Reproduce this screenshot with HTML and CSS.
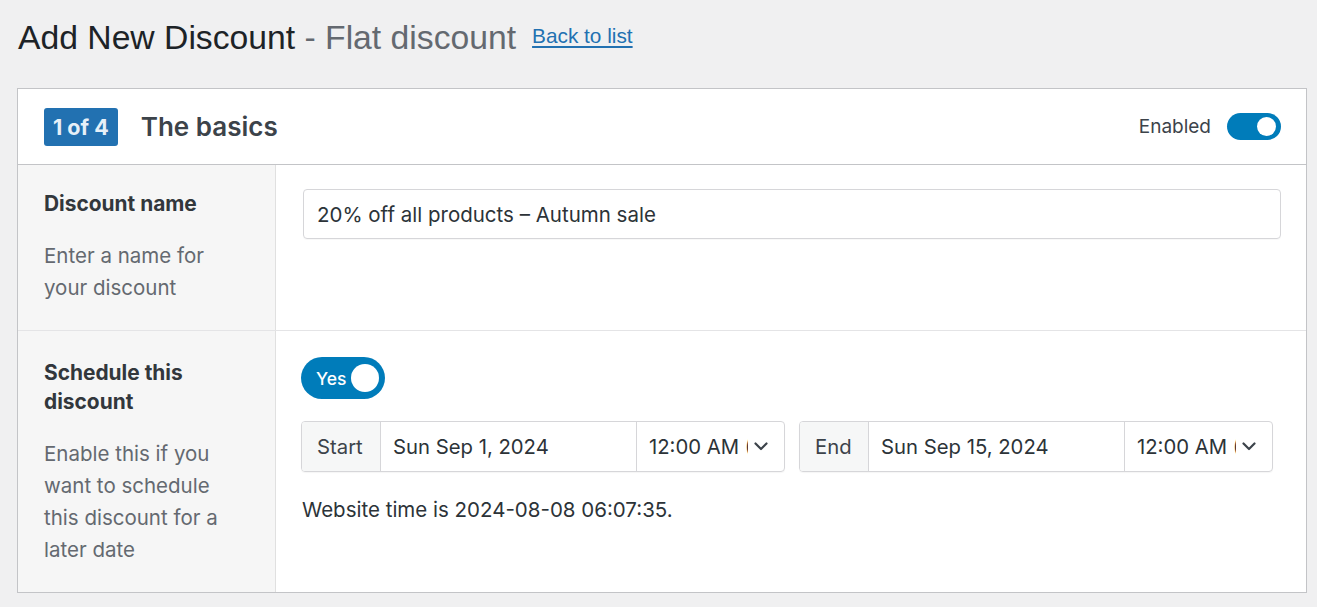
FILE: index.html
```html
<!DOCTYPE html>
<html>
<head>
<meta charset="utf-8">
<link rel="stylesheet" href="styles.css">
</head>
<body>
<div class="wrap">
  <div class="page-head">
    <h1 class="title">Add New Discount <span class="sub">- Flat discount</span></h1>
    <a class="back" href="#">Back to list</a>
  </div>
  <div class="card">
    <div class="card-head">
      <div class="step">
        <span class="badge">1 of 4</span>
        <h2 class="step-title">The basics</h2>
      </div>
      <div class="enabled">
        <span class="enabled-label">Enabled</span>
        <span class="switch"><span class="knob"></span></span>
      </div>
    </div>
    <div class="row">
      <div class="label-col">
        <div class="label">Discount name</div>
        <div class="desc">Enter a name for your discount</div>
      </div>
      <div class="field-col">
        <div class="text-input">20% off all products – Autumn sale</div>
      </div>
    </div>
    <div class="row row-last">
      <div class="label-col">
        <div class="label">Schedule this discount</div>
        <div class="desc">Enable this if you want to schedule this discount for a later date</div>
      </div>
      <div class="field-col">
        <span class="yes-switch"><span class="yes-text">Yes</span><span class="yes-knob"></span></span>
        <div class="dates">
          <div class="date-group">
            <span class="addon addon-start">Start</span>
            <span class="date">Sun Sep 1, 2024</span>
            <span class="time"><span class="time-text">12:00 AM (GMT)</span><svg class="chev" width="14" height="9" viewBox="0 0 14 9"><path d="M1.5 1.5 L7 7 L12.5 1.5" fill="none" stroke="#3c434a" stroke-width="2.2" stroke-linecap="round" stroke-linejoin="round"/></svg></span>
          </div>
          <div class="date-group">
            <span class="addon addon-end">End</span>
            <span class="date">Sun Sep 15, 2024</span>
            <span class="time"><span class="time-text">12:00 AM (GMT)</span><svg class="chev" width="14" height="9" viewBox="0 0 14 9"><path d="M1.5 1.5 L7 7 L12.5 1.5" fill="none" stroke="#3c434a" stroke-width="2.2" stroke-linecap="round" stroke-linejoin="round"/></svg></span>
          </div>
        </div>
        <div class="site-time">Website time is 2024-08-08 06:07:35.</div>
      </div>
    </div>
  </div>
</div>
</body>
</html>
```

FILE: styles.css
```css
* { box-sizing: border-box; }
html, body { margin: 0; padding: 0; }
body {
  background: #f0f0f1;
  font-family: Inter, "Noto Sans", sans-serif;
  color: #3c434a;
  width: 1317px;
  height: 607px;
  overflow: hidden;
}
.wrap { padding: 16px 0 0 17px; }
.page-head {
  display: flex;
  align-items: flex-start;
  gap: 16px;
  height: 72px;
  padding-left: 1px;
}
.title {
  margin: 0;
  font-family: "Liberation Sans", Arial, sans-serif;
  font-weight: 400;
  font-size: 33.7px;
  line-height: 42px;
  color: #1d2327;
}
.title .sub { color: #646970; }
.back {
  font-family: "Liberation Sans", Arial, sans-serif;
  font-size: 20.8px;
  line-height: 24px;
  color: #2271b1;
  text-decoration: underline;
  text-underline-offset: 3px;
  margin-top: 8px;
}
.card {
  width: 1290px;
  background: #fff;
  border: 1px solid #c3c4c7;
}
.card-head {
  height: 76px;
  display: flex;
  align-items: center;
  justify-content: space-between;
  padding: 0 25px 0 26px;
  border-bottom: 1px solid #c3c4c7;
}
.step { display: flex; align-items: center; gap: 23px; }
.badge {
  background: #2271b1;
  color: #e6f0f8;
  font-weight: 700;
  font-size: 21.5px;
  line-height: 38px;
  height: 38px;
  padding: 0 9px;
  border-radius: 3px;
}
.step-title {
  margin: 0;
  font-size: 26px;
  font-weight: 600;
  color: #3c434a;
}
.enabled { display: flex; align-items: center; gap: 16px; }
.enabled-label { font-size: 19px; color: #3c434a; }
.switch {
  width: 54px;
  height: 27px;
  background: #007cba;
  border-radius: 14px;
  display: flex;
  align-items: center;
  justify-content: flex-end;
  padding-right: 5px;
}
.knob { width: 19px; height: 19px; border-radius: 50%; background: #fff; }
.row {
  display: grid;
  grid-template-columns: 258px 1fr;
  border-bottom: 1px solid #e4e4e6;
  min-height: 166px;
}
.row-last { border-bottom: none; min-height: 261px; }
.label-col {
  background: #f6f6f6;
  border-right: 1px solid #e0e0e0;
  padding: 24px 30px 20px 26px;
}
.label {
  font-weight: 700;
  font-size: 20.9px;
  line-height: 29px;
  color: #32373c;
}
.desc {
  margin-top: 22px;
  font-size: 20.5px;
  line-height: 32px;
  color: #646970;
}
.row-last .label-col { padding-top: 27px; }
.row-last .desc { margin-top: 22px; }
.field-col { padding: 24px 25px 20px 27px; }
.text-input {
  height: 50px;
  border: 1px solid #d6d6d9;
  border-radius: 4px;
  padding: 0 13px;
  display: flex;
  align-items: center;
  font-size: 20.5px;
  color: #2c3338;
  box-shadow: 0 1px 1px rgba(0,0,0,0.03);
}
.row-last .field-col { padding: 26px 25px 20px 25px; }
.yes-switch {
  width: 84px;
  height: 42px;
  border-radius: 21px;
  background: #007cba;
  display: flex;
  align-items: center;
  justify-content: space-between;
  padding: 0 6px 0 15px;
}
.yes-text { color: #fff; font-size: 17.5px; font-weight: 500; }
.yes-knob { width: 28px; height: 28px; border-radius: 50%; background: #fff; }
.dates { display: flex; gap: 14px; margin-top: 22px; }
.date-group {
  display: flex;
  height: 51px;
  border: 1px solid #d6d6d9;
  border-radius: 4px;
  overflow: hidden;
  font-size: 20.3px;
  color: #2c3338;
  box-shadow: 0 1px 1px rgba(0,0,0,0.04);
}
.addon {
  background: #f6f7f7;
  border-right: 1px solid #d6d6d9;
  display: flex;
  align-items: center;
  padding: 0 15px;
  color: #3c434a;
}
.addon-start { width: 79px; }
.addon-end { width: 69px; }
.date {
  width: 256px;
  border-right: 1px solid #d6d6d9;
  display: flex;
  align-items: center;
  padding: 0 12px;
}
.time {
  width: 147px;
  display: flex;
  align-items: center;
  padding: 0 10px 0 12px;
  gap: 6px;
}
.time-text {
  width: 99px;
  overflow: hidden;
  white-space: nowrap;
  flex: none;
}
.chev { flex: none; }
.site-time {
  margin-top: 25px;
  font-size: 20.5px;
  color: #2c3338;
  padding-left: 1px;
}
```
